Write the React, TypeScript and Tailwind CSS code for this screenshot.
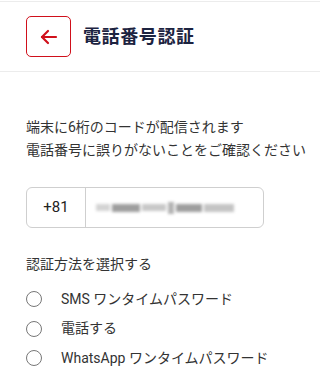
export default function App() {
    const methods = ["SMS ワンタイムパスワード", "電話する", "WhatsApp ワンタイムパスワード"];

    return (
        <div
            className="w-[320px] h-[385px] bg-white overflow-hidden"
            style={{ fontFamily: 'Roboto, "Noto Sans CJK JP", sans-serif' }}
        >
            {/* header */}
            <div className="mt-[1px] border-t border-b border-[#ececec] h-[71px] flex items-center px-[26px] gap-3">
                <button className="w-[45px] h-[41px] border border-[#d0101b] rounded-[5px] flex items-center justify-center">
                    <svg width="24" height="24" viewBox="0 0 24 24" fill="none" stroke="#d0101b" strokeWidth="2.2" strokeLinecap="round" strokeLinejoin="round">
                        <path d="M19 12H5" />
                        <path d="M11 6l-6 6 6 6" />
                    </svg>
                </button>
                <h1 className="text-[18px] font-bold text-[#1c2340] tracking-[0.6px]">電話番号認証</h1>
            </div>

            <div className="pl-[26px]">
                <p className="mt-[44px] text-[14px] leading-[23px] text-[#333] whitespace-nowrap">
                    端末に6桁のコードが配信されます<br />
                    電話番号に誤りがないことをご確認ください
                </p>

                {/* phone input */}
                <div className="mt-[25px] w-[238px] h-[41px] border border-[#cfcfcf] rounded-[6px] flex items-center">
                    <div className="w-[59px] h-full border-r border-[#cfcfcf] flex items-center justify-center text-[15px] text-[#222]">
                        +81
                    </div>
                    <div className="pl-[10px] flex items-center gap-[2px] blur-[1.5px]">
                        <span className="w-[14px] h-[7px] bg-[#d4d4d4]" />
                        <span className="w-[28px] h-[8px] bg-[#9e9e9e]" />
                        <span className="w-[24px] h-[7px] bg-[#c8c8c8]" />
                        <span className="w-[6px] h-[12px] bg-[#b4b4b4]" />
                        <span className="w-[26px] h-[8px] bg-[#9e9e9e]" />
                        <span className="w-[30px] h-[8px] bg-[#c4c4c4]" />
                    </div>
                </div>

                <p className="mt-[26px] text-[14px] leading-[20px] text-[#333]">認証方法を選択する</p>

                <div className="mt-[15px] flex flex-col gap-[9.5px]">
                    {methods.map((m) => (
                        <label key={m} className="flex items-center h-[20px]">
                            <span className="w-[16px] h-[16px] rounded-full border-[1.5px] border-[#777] mr-[19px]" />
                            <span className="text-[14px] text-[#333]">{m}</span>
                        </label>
                    ))}
                </div>
            </div>
        </div>
    );
}
